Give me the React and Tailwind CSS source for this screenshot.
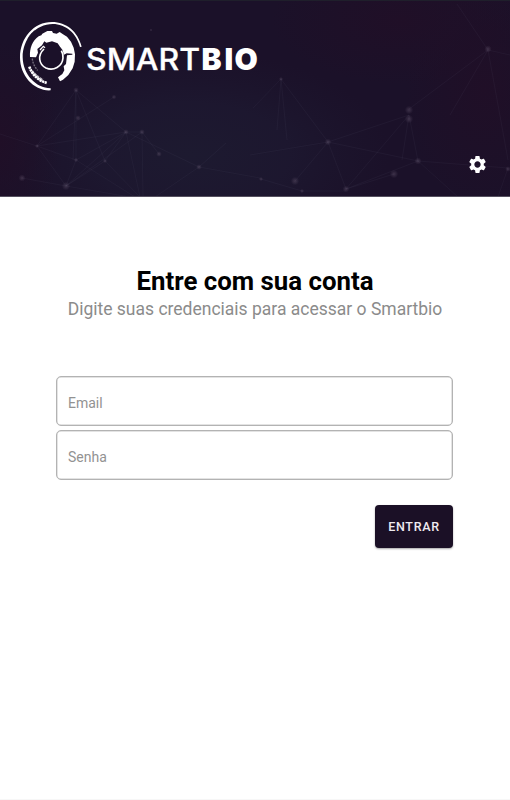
import React from "react";
import { MdSettings } from "react-icons/md";

const links = [
  [76, 90, 37, 146], [37, 146, 66, 186], [37, 146, 76, 160], [76, 90, 76, 160],
  [76, 160, 66, 186], [76, 90, 126, 132], [37, 146, 126, 132], [76, 160, 126, 132],
  [66, 186, 126, 132], [66, 186, 142, 132], [66, 186, 105, 161], [105, 161, 126, 132],
  [126, 132, 142, 132], [76, 90, 105, 161], [105, 161, 140, 197], [76, 160, 135, 197],
  [126, 132, 140, 197], [142, 132, 143, 197], [142, 132, 159, 154], [126, 132, 199, 167],
  [199, 167, 155, 197], [199, 167, 260, 178], [199, 167, 226, 143], [37, 146, 0, 134],
  [66, 186, 22, 178], [66, 186, 130, 197], [76, 90, 73, 160], [37, 146, 114, 97],
  [281, 79, 328, 142], [281, 79, 253, 108], [281, 79, 287, 140], [281, 79, 277, 130],
  [328, 142, 250, 155], [328, 142, 409, 115], [328, 142, 346, 189], [328, 142, 418, 161],
  [328, 142, 295, 181], [409, 115, 402, 160], [409, 115, 418, 161], [409, 115, 346, 189],
  [346, 189, 418, 161], [346, 189, 394, 174], [488, 50, 409, 109], [488, 50, 450, 115],
  [488, 50, 457, 4], [488, 50, 508, 160], [488, 50, 510, 55], [261, 179, 302, 191],
  [302, 191, 346, 191], [418, 161, 508, 168], [508, 168, 498, 197], [418, 161, 458, 197],
];
const nodes = [
  [76, 90, 2], [151, 30, 1], [37, 146, 1.5], [78, 118, 2], [76, 160, 1.6], [66, 186, 3],
  [105, 161, 1.5], [114, 97, 1.7], [126, 132, 2], [142, 132, 2], [159, 154, 2], [199, 167, 2],
  [22, 178, 2.5], [281, 79, 1.5], [328, 142, 2.4], [346, 189, 2.4], [418, 161, 2.5],
  [409, 110, 3], [409, 119, 3], [488, 49, 2.6], [295, 181, 3], [302, 191, 1.5],
  [261, 179, 1.5], [508, 169, 2], [394, 174, 3],
];

function Network() {
  return (
    <svg className="absolute inset-0 h-full w-full" viewBox="0 1 510 195" preserveAspectRatio="none" aria-hidden="true">
      <defs>
        <radialGradient id="blue"><stop stopColor="#1d1a30" /><stop offset=".5" stopColor="#1d1830" stopOpacity=".85" /><stop offset="1" stopColor="#1c162e" stopOpacity="0" /></radialGradient>
        <radialGradient id="plum"><stop stopColor="#200f27" /><stop offset="1" stopColor="#200f27" stopOpacity="0" /></radialGradient>
        <radialGradient id="dot"><stop stopColor="#786880" stopOpacity=".36" /><stop offset="1" stopColor="#786880" stopOpacity="0" /></radialGradient>
      </defs>
      <ellipse cx="190" cy="155" rx="200" ry="105" fill="url(#blue)" />
      <ellipse cx="0" cy="140" rx="60" ry="100" fill="url(#plum)" />
      <ellipse cx="400" cy="20" rx="130" ry="65" fill="url(#plum)" />
      <ellipse cx="485" cy="90" rx="80" ry="120" fill="url(#plum)" />
      <g stroke="#70708c" strokeOpacity=".08" strokeWidth="1">
        {links.map(([a, b, c, d], i) => <line key={i} x1={a} y1={b} x2={c} y2={d} />)}
      </g>
      {nodes.map(([x, y, r], i) => <circle key={i} cx={x} cy={y} r={r * 1.4} fill="url(#dot)" />)}
    </svg>
  );
}

function Emblem() {
  return (
    <svg className="h-[84px] w-[80px] shrink-0" viewBox="0 0 240 252" aria-hidden="true">
      <path fill="#fff" d="M215 98C203 52 169 24 126 24C71 24 30 72 30 130C30 187 73 232 122 229L122 223C77 222 39 182 38 130C38 75 77 30 128 30C168 30 200 59 210 99Z" />
      <path d="M54 74C59 64 66 56 74 49" fill="none" stroke="#1b1129" strokeWidth="2" />
      <path fill="#fff" d="M60 129C58 103 68 79 86 67L94 64L97 59L112 51L126 51L129 57L140 59L149 54L159 61L171 68L183 83L191 101L195 121L194 143L188 163L175 183L159 197L150 202L144 190L157 180L163 169L161 157L168 150L171 124L187 122V119L170 118L162 122L157 107L149 97L143 88L126 82L109 86L103 82L96 94L82 105L84 116L78 130Z" />
      <path d="M102 105C82 124 86 151 108 162C130 172 157 158 159 132C160 124 158 116 154 110" fill="none" stroke="#fff" strokeWidth="5" />
      <path d="M90 108L100 97L105 101" fill="none" stroke="#fff" strokeWidth="4" />
      <path d="M58 158C66 181 84 199 110 207" fill="none" stroke="#fff" strokeWidth="8" strokeDasharray="7 1.5" />
      <path d="M66 172C74 182 84 191 98 198" fill="none" stroke="#fff" strokeWidth="8" strokeOpacity=".7" strokeDasharray="8 2" />
      <path d="M67 134C68 147 74 159 83 169" fill="none" stroke="#fff" strokeOpacity=".4" strokeWidth="4" strokeDasharray="6 3" />
    </svg>
  );
}

function Field({ label, type }) {
  return (
    <input
      type={type}
      placeholder={label}
      aria-label={label}
      className="block h-[50px] w-full rounded-[5px] border border-[#b3b3b3] bg-white px-[11px] pt-[3px] text-[14px] text-[#333] shadow-[inset_0_0_0_0.5px_#c8c8c8] outline-none placeholder:text-[#929292]"
    />
  );
}

export default function App() {
  return (
    <main className="flex h-[800px] w-[510px] flex-col overflow-hidden border-b border-[#f7f7f7] bg-white font-[Roboto,sans-serif]">
      <header className="relative flex h-[197px] shrink-0 flex-col justify-between border-t border-b border-t-[#1f1f2b] border-b-[#55505f] bg-[#1b1129]">
        <Network />
        <div className="relative flex items-start pt-[13px] pl-[10px]">
          <Emblem />
          <svg className="-ml-[10px] h-[84px] w-[190px]" viewBox="80 14 190 84" fill="#fff" role="img" aria-label="SMARTBIO">
            <g fontFamily="Inter, sans-serif" fontSize="30">
              <text x="86" y="70" fontWeight="500" stroke="#fff" strokeWidth="0.3" textLength="114" lengthAdjust="spacingAndGlyphs">SMART</text>
              <text x="201.5 224.5 234.5" y="70" fontWeight="900">BIO</text>
            </g>
          </svg>
        </div>
        <button className="relative mr-[22px] mb-[21px] self-end text-white" aria-label="Configurações">
          <MdSettings size={21} />
        </button>
      </header>
      <section className="flex flex-col pt-[68px] pr-[56px] pl-[56px]">
        <h1 className="text-center text-[25.8px] leading-[32px] font-bold whitespace-nowrap text-black">Entre com sua conta</h1>
        <p className="text-center text-[17.5px] leading-[24px] whitespace-nowrap text-[#8b8b8b]">Digite suas credenciais para acessar o Smartbio</p>
        <form className="mt-[55px] mr-px flex flex-col gap-1" onSubmit={(e) => e.preventDefault()}>
          <Field label="Email" type="email" />
          <Field label="Senha" type="password" />
          <button className="mt-[21px] h-[43px] w-[78px] self-end rounded-[4px] bg-[#1b1026] pt-[2px] text-[12.5px] font-medium tracking-[0.7px] text-[#eeeaf0] shadow-[0_1px_2px_rgba(0,0,0,0.35)]">ENTRAR</button>
        </form>
      </section>
    </main>
  );
}
